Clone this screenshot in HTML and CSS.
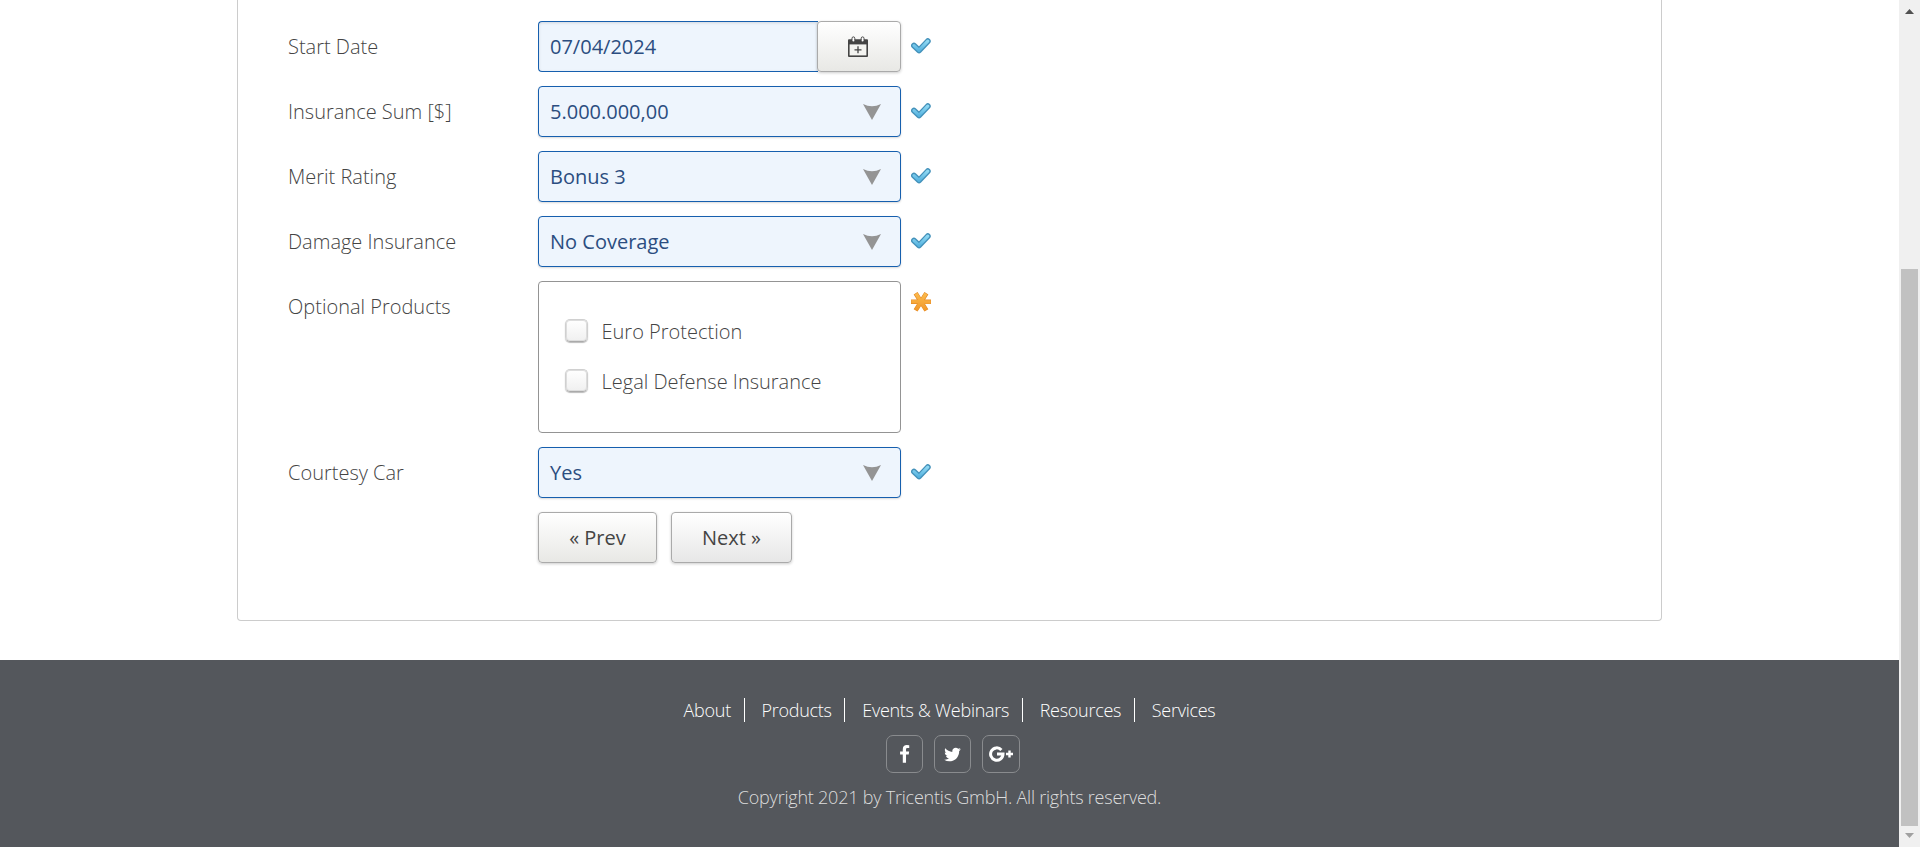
FILE: index.html
```html
<!DOCTYPE html>
<html lang="en">
<head>
<meta charset="utf-8">
<title>Product Data</title>
<link rel="stylesheet" href="styles.css">
</head>
<body>
<svg class="defs" width="0" height="0">
  <defs>
    <linearGradient id="blue" x1="0" y1="0" x2="0" y2="1"><stop offset="0" stop-color="#8fd8f3"/><stop offset="1" stop-color="#57b3df"/></linearGradient>
    <linearGradient id="orange" x1="0" y1="0" x2="0" y2="1"><stop offset="0" stop-color="#fbb94b"/><stop offset="1" stop-color="#f29a2c"/></linearGradient>
    <symbol id="check" viewBox="0 0 20 17">
      <path d="M3 7.6 L8 12.4 L16.8 3.2" fill="none" stroke="#4391ba" stroke-width="5.8" stroke-linecap="round" stroke-linejoin="round"/>
      <path d="M3 7.6 L8 12.4 L16.8 3.2" fill="none" stroke="url(#blue)" stroke-width="3.2" stroke-linecap="round" stroke-linejoin="round"/>
    </symbol>
    <symbol id="arrow" viewBox="0 0 18 16"><path d="M0 0 Q9 4.6 18 0 L9 16 Z" fill="#949494"/></symbol>
  </defs>
</svg>
<div class="window">
  <div class="page">
    <main class="panel">
      <form class="form">
        <div class="row">
          <label class="label">Start Date</label>
          <div class="date"><span class="value date-value">07/04/2024</span><span class="button date-button">
            <svg width="20" height="22" viewBox="0 0 20 22"><path d="M0 4.2Q0 3.2 1 3.2h18q1 0 1 1V20q0 1-1 1H1q-1 0-1-1z" fill="#444"/><path d="M1.6 8.4h16.8v11H1.6z" fill="#f4f4f1"/><rect x="4" y=".9" width="2.8" height="5" rx="1.4" fill="#fff" stroke="#444"/><rect x="13.2" y=".9" width="2.8" height="5" rx="1.4" fill="#fff" stroke="#444"/><path d="M10 10.3v7M6.5 13.8h7" stroke="#444" stroke-width="1.3"/></svg>
          </span></div>
          <svg class="status"><use href="#check"/></svg>
        </div>
        <div class="row">
          <label class="label">Insurance Sum [$]</label>
          <div class="value select">5.000.000,00<svg class="arrow"><use href="#arrow"/></svg></div>
          <svg class="status"><use href="#check"/></svg>
        </div>
        <div class="row">
          <label class="label">Merit Rating</label>
          <div class="value select">Bonus 3<svg class="arrow"><use href="#arrow"/></svg></div>
          <svg class="status"><use href="#check"/></svg>
        </div>
        <div class="row">
          <label class="label">Damage Insurance</label>
          <div class="value select">No Coverage<svg class="arrow"><use href="#arrow"/></svg></div>
          <svg class="status"><use href="#check"/></svg>
        </div>
        <div class="row">
          <label class="label">Optional Products</label>
          <div class="group">
            <label class="option"><span class="box"></span>Euro Protection</label>
            <label class="option"><span class="box"></span>Legal Defense Insurance</label>
          </div>
          <svg class="required" viewBox="0 0 20 20"><g stroke="#e58a25" stroke-width="4.6"><path d="M0 9.8h20M4.6 1.2l10.8 17.2M15.4 1.2L4.6 18.4"/></g><g stroke="url(#orange)" stroke-width="3.4"><path d="M.4 9.6L19.6 10M5 1.6l10 16.4M15 1.6L5 18"/></g></svg>
        </div>
        <div class="row">
          <label class="label">Courtesy Car</label>
          <div class="value select">Yes<svg class="arrow"><use href="#arrow"/></svg></div>
          <svg class="status"><use href="#check"/></svg>
        </div>
        <div class="row actions">
          <span class="button prev">« Prev</span>
          <span class="button next">Next »</span>
        </div>
      </form>
    </main>
    <footer class="footer">
      <nav class="links"><a>About</a><a>Products</a><a>Events &amp; Webinars</a><a>Resources</a><a>Services</a></nav>
      <div class="social">
        <a class="tile"><svg width="19" height="19" viewBox="0 0 1792 1792"><path d="M1343 12v264h-157q-86 0-116 36t-30 108v189h293l-39 296h-254v759h-306v-759h-255v-296h255v-218q0-186 104-288.5t277-102.5q147 0 228 12z"/></svg></a>
        <a class="tile"><svg width="19" height="19" viewBox="0 0 1792 1792"><path d="M1684 408q-67 98-162 167 1 14 1 42 0 130-38 259.5t-115.5 248.5-184.5 210.5-258 146-323 54.5q-271 0-496-145 35 4 78 4 225 0 401-138-105-2-188-64.5t-114-159.5q33 5 61 5 43 0 85-11-112-23-185.5-111.5t-73.5-205.5v-4q68 38 146 41-66-44-105-115t-39-154q0-88 44-163 121 149 294.5 238.5t371.5 99.5q-8-38-8-74 0-134 94.5-228.5t228.5-94.5q140 0 236 102 109-21 205-78-37 115-142 178 93-10 186-50z"/></svg></a>
        <a class="tile tile-wide"><svg width="24" height="16" viewBox="0 0 24 16"><path d="M12.4 3.9A6.2 6.2 0 1 0 14 8.1H8" fill="none" stroke="#fff" stroke-width="3"/><path d="M17 8h7M20.5 4.5v7" stroke="#fff" stroke-width="2.4"/></svg></a>
      </div>
      <p class="copyright">Copyright 2021 by Tricentis GmbH. All rights reserved.</p>
    </footer>
  </div>
  <div class="scrollbar">
    <svg class="up" width="9" height="5" viewBox="0 0 9 5"><path d="M0 5L4.5 0 9 5z"/></svg>
    <div class="thumb"></div>
    <svg class="down" width="9" height="5" viewBox="0 0 9 5"><path d="M0 0h9L4.5 5z"/></svg>
  </div>
</div>
</body>
</html>
```
FILE: styles.css
```css
* { box-sizing: border-box; }
body { margin: 0; font-family: "Open Sans", "Noto Sans", sans-serif; font-size: 20px; font-weight: 300; color: #444; background: #fff; }
.defs { position: absolute; }
.window { display: flex; height: 847px; overflow: hidden; }
.page { width: 1899px; display: flex; flex-direction: column; }
.panel { width: 1425px; height: 621px; margin: 0 0 39px 237px; padding: 21px 0 0 50px; border: 1px solid #ccc; border-top: 0; border-radius: 0 0 4px 4px; }
.form { display: flex; flex-direction: column; gap: 14px; }
.row { display: flex; align-items: flex-start; }
.label { width: 250px; line-height: 51px; }
.value { display: flex; align-items: center; justify-content: space-between; height: 51px; padding: 0 19px 0 11px; border: 1px solid #165fae; border-radius: 4px; background: #eef5fd; color: #2b4d80; font-weight: 400; box-shadow: 0 1px 2px rgba(0,0,0,.15); }
.select { width: 363px; }
.arrow { width: 18px; height: 16px; }
.date { display: flex; width: 363px; }
.date-value { width: 280px; border-right: 0; border-radius: 4px 0 0 4px; box-shadow: inset 0 1px 3px rgba(0,0,0,.12); }
.button { display: flex; align-items: center; justify-content: center; height: 51px; border: 1px solid #aaa; border-radius: 4px; background: linear-gradient(#fff, #e8e8e5); color: #444; font-weight: 400; box-shadow: 0 1px 3px rgba(0,0,0,.2); }
.date-button { width: 84px; margin-left: -1px; padding-right: 2px; }
.status { width: 20px; height: 17px; margin: 17px 0 0 10px; }
.required { width: 20px; height: 20px; margin: 11px 0 0 10px; }
.group { display: flex; flex-direction: column; width: 363px; height: 152px; padding: 25px 0 0 26px; border: 1px solid #949494; border-radius: 4px; }
.option { display: flex; align-items: center; gap: 13.5px; height: 50px; line-height: 50px; }
.box { width: 23px; height: 23px; margin-top: -3px; border: 1px solid #d0d0d0; border-bottom-color: #aaa; border-radius: 5px; background: linear-gradient(#fff, #f0f0f0); box-shadow: inset 0 0 0 1px #ddd, 0 1px 1px #bbb; }
.actions { gap: 14px; padding-left: 250px; }
.prev { width: 119px; }
.next { width: 121px; background: linear-gradient(#fff, #e7e7e7); }
.footer { display: flex; flex-direction: column; align-items: center; height: 187px; padding-top: 38px; background: #54575c; color: #fff; font-size: 18px; letter-spacing: -.22px; }
.links { display: flex; height: 24px; line-height: 24px; letter-spacing: -.28px; }
.links a { padding: 0 12.6px 0 17px; border-right: 1px solid #fff; }
.links a:first-child { padding-left: 0; }
.links a:last-child { padding-right: 0; border: 0; }
.social { display: flex; gap: 11px; margin: 13px 0 12px; padding-left: 6px; }
.tile { display: flex; align-items: center; justify-content: center; width: 37px; height: 38px; border: 1px solid #898b8e; border-radius: 7px; fill: #fff; }
.tile-wide { width: 38px; }
.copyright { margin: 0; line-height: 24px; color: #ddd; }
.scrollbar { display: flex; flex-direction: column; align-items: center; width: 21px; padding: 9px 0 9px; background: #f0f0f0; }
.up { fill: #505050; }
.thumb { width: 17px; height: 557px; margin: 255px 0 7px; background: #c1c1c1; flex: none; }
.down { fill: #a0a0a0; }
```
